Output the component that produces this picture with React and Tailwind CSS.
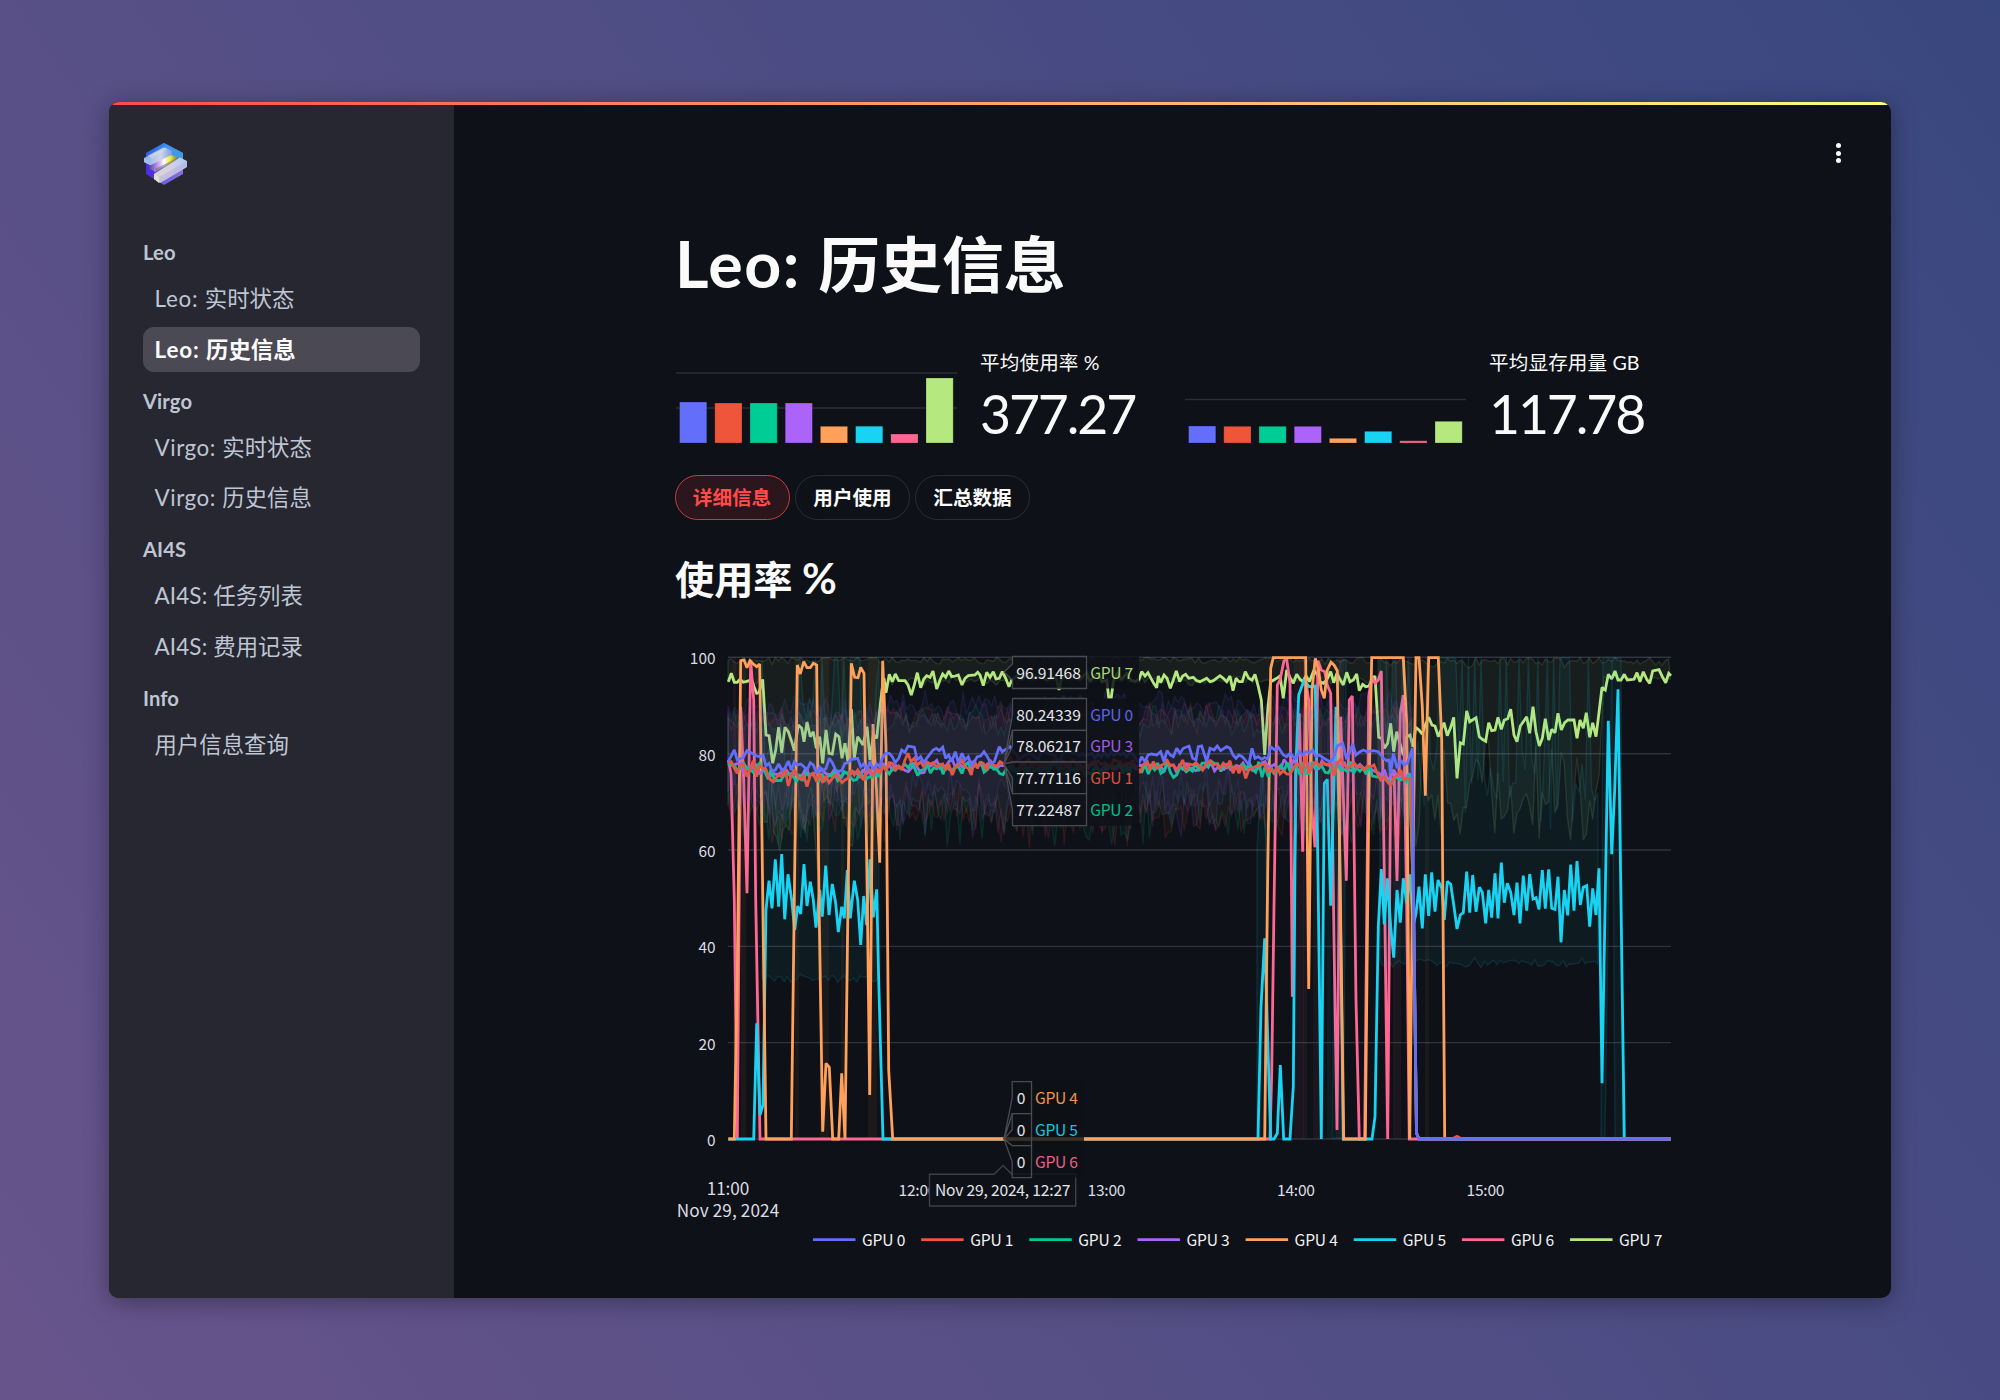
import React from 'react';

const C = ['#636efa', '#ef553b', '#00cc96', '#ab63fa', '#ffa15a', '#19d3f3', '#ff6692', '#b6e880'];
const UI = "font-['Lato','Noto_Sans_CJK_SC',sans-serif]";

/* ---------- chart data ---------- */
const Y0 = 1139;
const X_END = 1671;

// Turns "x,y x,y" written in 1/3 px units of a tile into chart coordinates.
const tile = (ox, oy, s) =>
  s.trim().split(/\s+/).map((p) => {
    const [x, y] = p.split(',').map(Number);
    return [ox + x / 3, oy + y / 3];
  });
const A = (s) => tile(660, 540, s);
const B = (s) => tile(980, 640, s);
const D = (s) => tile(1230, 640, s);
const E = (s) => tile(1440, 640, s);

const rng = (seed) => {
  let a = seed;
  return () => {
    a = (a * 1664525 + 1013904223) % 4294967296;
    return a / 4294967296;
  };
};
const noise = (seed, from, to, mean, amp) => {
  const r = rng(seed);
  const out = [];
  for (let x = from; x <= to; x += 3.158) out.push([x, mean + (r() + r() - 1) * amp]);
  return out;
};
// A mostly flat upper bound with frequent one-sample peaks at 100.
const spiky = (seed, from, to, low, amp) => {
  const r = rng(seed);
  const out = [];
  for (let x = from; x <= to; x += 3.158) out.push([x, r() < 0.36 ? 658 : low + (r() + r() - 1) * amp]);
  return out;
};
const path = (pts) => 'M' + pts.map(([x, y]) => x.toFixed(1) + ' ' + y.toFixed(1)).join('L');
const area = (up, low) => path(up) + 'L' + path([...low].reverse()).slice(1) + 'Z';

const drop = [[1413.5, 900], [1416.5, 1133], [1419, Y0]];
const rest = [[X_END, Y0]];

const gpu7 = [
  ...A('205,425 214,400 223,427 232,427 240,418 250,427 268,422 275,418 282,440 290,460 297,458 308,418 318,585 327,587 338,670 347,630 356,562 365,638 375,562 385,575 395,605 403,632 415,555 425,565 432,605 441,546 451,590 460,575 469,625 479,590 488,670 498,570 507,640 517,642 527,582 537,590 546,655 555,610 564,665 574,507 583,655 593,590 609,615 621,560 630,660 640,585 650,595 659,510 666,450 672,415 678,458 688,403 697,425 706,402 716,422 735,422 744,435 754,465 763,435 772,398 782,443 791,418 800,407 810,412 819,393 830,447 840,420 848,402 857,412 866,393 875,410 886,408 895,405 906,435 915,415 925,407 945,405 953,397'),
  ...B('0,105 10,137 20,97 30,112 40,95 48,117 58,115 67,95 77,115 87,140 95,120 110,108 125,118 140,105 160,115 180,108 200,120 228,110 237,150 246,112 270,105 300,118 320,98 330,125 342,108 355,100 366,125 380,120 386,172 394,172 400,125 412,100 425,118 440,100 452,120 465,125 477,118 485,95 495,108 504,98 513,115 521,130 530,143 535,108 542,128 552,105 561,115 571,145 580,120 589,93 599,125 608,108 617,103 626,115 640,112 650,122 660,125 680,115 690,125 700,122 720,107 730,115 740,125'),
  ...D('0,108 9,152 18,115 27,125 37,125 46,95 56,115 66,120 75,103 85,140 94,180 104,345 114,200 122,125 140,115 150,108 160,175 170,90 180,112 190,130 200,103 210,118 219,125 228,107 238,125 252,90 262,105 270,125 280,130 290,120 302,95 311,128 321,100 330,118 340,135 350,97 360,125 370,120 380,102 388,152 398,133 407,140 417,138 425,120 435,108 446,292 455,295 463,325 473,310 482,250 491,335 500,275 510,310 520,345 530,290 540,285 549,320 557,262 567,270 577,282 586,255 596,232 606,255 615,258 625,290'),
  ...E('5,265 12,248 22,287 32,262 41,232 51,415 61,308 70,312 80,213 89,245 108,233 118,290 127,298 137,304 146,248 155,272 165,270 174,232 184,268 193,240 203,236 212,208 222,285 231,305 241,258 250,245 260,230 269,280 279,200 288,275 298,318 307,295 316,236 326,300 335,268 345,278 354,220 364,270 374,248 384,240 402,240 411,295 420,240 430,265 439,218 449,292 458,248 468,290 478,210 486,142 496,150 505,103 515,117 525,93 534,120 543,120 553,103 562,120 582,118 591,98 600,125 610,95 620,118 629,130 638,93 657,89 667,110 677,128 686,100 693,107'),
];
const gpu6 = [
  ...A('205,660 213,700 223,1080 232,1797 242,500 251,720 261,1060 272,360 281,480 287,1080 300,1797'),
  ...D('120,1497 125,1300 132,800 142,135 150,120 162,62 170,58 180,130 187,1070 198,400 208,220 218,635 227,120 236,180 245,500 255,622 264,62 274,90 284,95 292,135 302,160 312,900 321,1470 332,230 341,500 349,722 358,180 367,168 378,1080 388,1497 404,1497 416,170 425,110 435,130 445,120 454,93 463,700 473,1497 482,400 492,390 501,723 511,220 520,165 530,800 538,1497'),
  ...rest,
];
const gpu5 = [
  ...A('205,1797 281,1797 290,1450 300,1725 309,1695 318,1110 327,1022 336,1105 346,958 356,1100 365,942 374,1138 384,1003 395,1080 404,1170 413,1098 422,1122 432,972 441,1098 451,1025 460,1080 468,1163 479,1050 487,1130 497,977 507,1125 517,1032 527,1090 535,1176 545,1100 553,1135 562,990 571,1135 583,1022 593,1080 602,1215 611,1068 620,1155 630,958 640,1132 650,1048 656,1320 669,1797'),
  ...D('84,1497 93,1100 104,895 122,1497 132,1497 142,1480 151,1275 161,1497 180,1497 190,1340 197,400 206,165 222,122 238,140 256,138 264,700 274,1497 283,430 292,418 302,797 318,200 328,560 340,1497 426,1497 435,1430 445,860 454,687 463,853 472,715 482,860 491,953 501,750 511,848 520,715 530,790 540,703 549,860 558,820 567,740 577,865 586,703 596,828 605,697 615,815 624,720'),
  ...E('5,745 13,840 22,724 32,733 42,800 51,867 61,825 70,818 80,695 89,818 98,705 108,815 118,742 127,757 137,850 146,750 155,833 165,700 174,835 184,668 193,788 202,730 212,757 222,825 231,728 240,850 250,707 260,812 269,702 279,777 288,773 297,808 307,690 316,806 326,688 335,805 345,808 354,710 363,907 373,750 383,826 392,674 402,812 411,663 421,795 430,742 440,737 449,860 458,745 468,825 477,685 486,1330 505,242 515,643 524,450 534,148 553,1497'),
  ...rest,
];
const gpu4 = [
  ...A('205,1797 223,1797 232,1300 242,362 252,360 261,383 270,362 280,372 290,380 299,372 306,900 318,1797 394,1797 403,1080 412,375 421,402 431,365 441,383 451,383 460,370 470,375 477,1080 488,1775 498,1570 508,1582 518,1797 536,1797 545,1600 555,1797 564,1080 574,370 584,412 594,413 602,382 612,400 622,1080 629,1665 639,552 650,760 659,968 668,362 678,620 686,1590 698,1797'),
  ...D('104,1497 113,700 122,85 130,53 227,53 236,1047 246,150 256,55 265,85 274,150 283,175 292,90 303,67 312,75 322,92 330,700 341,1497 406,1497 416,500 425,53 520,53 530,250 539,1497 548,700 558,53 567,53 577,200 586,467 596,53 625,53 635,300 644,1497'),
  ...rest,
];
const gpu3 = [...noise(31, 728, 762, 766, 9), ...noise(32, 765, 880, 773, 8), ...noise(33, 883, 1375, 767, 8), ...noise(34, 1378, 1412, 775, 6), ...drop, ...rest];
const gpu2 = [...noise(21, 728, 762, 768, 8), ...noise(22, 765, 880, 776, 8), ...noise(23, 883, 1375, 769, 9), ...noise(24, 1378, 1412, 779, 6), ...drop, ...rest];
const gpu1 = [
  ...A('205,670 214,665 223,685 232,700 241,675 250,672 261,710 270,690 280,662 290,710 298,675 308,685 318,688 327,715 340,725 355,705 365,710 375,685 385,738 394,705 403,688 413,710 422,718 431,705 441,740 451,705 460,700 470,725 479,700 488,728 498,708 507,728 517,715 527,705 537,715 546,728 555,720 564,715 574,690 583,705 593,690 603,710 612,720 621,685 630,690 640,705 650,685 659,700 668,680 678,690 688,668 697,670 706,690 716,678 725,690 735,660 744,640 753,665 763,655 772,675 782,665 791,680 800,665 810,672 819,668 829,680 838,675 848,672 857,690 866,672 877,705 886,682 895,675 906,660 915,680 925,685 934,705 943,660 952,685'),
  ...B('0,368 10,370 20,390 30,360 40,375 50,378 60,365 70,372 80,368 90,352 100,370'),
  ...noise(11, 1016, 1136, 765, 8),
  ...B('480,398 490,375 502,365 510,390 520,365 530,385 540,378 552,372 560,358 570,378 580,375 590,388 600,378 608,360 618,392 628,372 638,375 648,368 658,378 668,390 678,372 690,362 700,375 710,372 720,385 730,370 740,382'),
  ...D('0,362 9,400 18,375 27,400 37,375 47,415 56,390 66,385 75,380 90,375 104,372 113,395 122,388 132,400 142,380 150,402 160,392 170,402 180,403 190,385 198,375 208,372 216,400 227,345 236,400 248,375 258,365 268,378 280,368 292,375 302,368 312,408 322,370 332,358 342,375 352,385 362,378 372,368 382,382 392,378 402,390 412,378 422,380 432,375 442,400 452,420 462,410 472,425 482,438 492,412 502,408 512,390 522,420 532,415 542,418'),
  ...drop, [1452, Y0], [1457, 1136.4], [1462, Y0], ...rest,
];
const gpu0 = [
  ...A('205,665 223,630 232,660 250,652 261,632 280,642 290,648 300,650 309,645 318,678 327,670 336,693 346,690 356,672 365,690 375,685 385,663 394,690 403,665 412,675 422,672 432,680 441,690 451,668 460,675 470,700 479,682 488,693 498,685 508,655 517,668 527,690 537,695 546,690 555,670 564,668 574,657 583,657 593,655 602,680 611,672 621,690 630,665 640,690 650,672 659,680 668,652 678,640 688,640 697,650 706,668 716,655 725,630 735,637 744,618 763,622 772,660 782,650 791,668 800,655 819,630 829,625 838,632 848,622 857,655 866,645 875,665 886,635 895,668 906,640 915,660 925,650 934,675 943,665 952,650'),
  ...B('2,348 12,335 22,350 32,370 43,365 58,320 67,335 77,328 90,320 100,335'),
  ...noise(3, 1016, 1136, 755, 7),
  ...B('477,370 485,350 495,365 504,345 514,342 530,345 542,335 552,365 561,332 571,345 580,350 590,325 600,340 610,325 627,318 638,355 648,360 655,320 665,318 680,365 690,325 702,330 712,318 722,332 740,320'),
  ...D('0,325 9,345 18,355 27,345 37,350 46,360 56,375 66,325 75,355 85,350 95,358 104,352 113,357 122,320 135,330 145,322 160,345 170,350 180,340 190,350 198,355 208,335 218,345 228,335 238,340 248,330 258,350 268,345 278,352 290,360 302,365 312,350 322,318 338,310 350,358 360,335 368,312 378,345 390,335 400,330 412,335 430,332 445,335 460,355 470,362 478,360 482,400 490,340 502,385 512,360 522,375 532,370 548,325'),
  ...drop, ...rest,
];

const band = (seed, up, low) => area(
  [...noise(seed, 728, 878, up + 4, 16), ...noise(seed + 1, 881, 1413, up, 18)],
  [...noise(seed + 2, 728, 878, low, 36), ...noise(seed + 3, 881, 1413, low, 38)],
);
const bands = {
  0: [band(101, 706, 795)],
  1: [band(111, 717, 812)],
  2: [band(121, 721, 815)],
  3: [band(131, 716, 803)],
  5: [
    area(spiky(51, 762, 880, 745, 70), noise(52, 762, 880, 978, 6)),
    area(spiky(53, 1380, 1598, 785, 60), noise(54, 1380, 1598, 963, 6)),
    area([[1336, 760], [1340, 660], [1346, 660]], [[1332, 1138], [1344, 1138]]),
    area([[1257, 850], [1262, 760], [1266, 850]], [[1257, 1138], [1270, 1138]]),
    area([[1603, 658], [1621, 658]], [[1601, 1138], [1605, 1138], [1612, 660], [1615, 1138], [1623, 1138]]),
  ],
  7: [
    area(noise(71, 728, 1375, 660, 5).map(([x, y]) => [x, Math.max(657.5, y)]), [...noise(72, 728, 762, 682, 5), ...noise(73, 764, 878, 812, 60), ...noise(74, 886, 1375, 681, 6)]),
    area(noise(75, 1378, X_END, 662, 7).map(([x, y]) => [x, Math.max(657.5, y)]), [...noise(76, 1378, 1600, 798, 62), ...noise(77, 1604, X_END, 678, 3)]),
  ],
  4: [],
  6: [],
};
const series = [
  [7, gpu7], [6, gpu6], [5, gpu5], [4, gpu4], [3, gpu3], [2, gpu2], [1, gpu1], [0, gpu0],
];

const stripes = [
  [733, 3, 6], [741, 5, 4], [755, 3, 6], [795, 4, 4], [820, 9, 4], [841, 3, 4], [868, 5, 4], [873, 4, 4],
  [1294, 10, 6], [1303, 4, 6], [1313, 9, 6], [1327, 4, 5], [1336, 8, 6], [1385, 4, 6], [1393, 8, 6], [1407, 5, 6], [1425, 4, 4],
];

const tips = [
  [656.5, '96.91468', 'GPU 7', 7], [698.5, '80.24339', 'GPU 0', 0], [730.3, '78.06217', 'GPU 3', 3],
  [762, '77.77116', 'GPU 1', 1], [793.7, '77.22487', 'GPU 2', 2],
];
const zeroTips = [[1081.7, 'GPU 4', 4], [1113.7, 'GPU 5', 5], [1145.7, 'GPU 6', 6]];

function UsageChart() {
  return (
    <svg className="mt-[35px] block shrink-0 font-['Noto_Sans_CJK_SC',sans-serif]" width="1010" height="620" viewBox="675 640 1010 620">
      {[657.3, 753.7, 850, 946.4, 1042.6, 1139].map((y, i) => (
        <g key={y}>
          <line x1="728" x2={X_END} y1={y} y2={y} stroke="#31333f" strokeWidth="1.4" />
          <text x="715.5" y={y + 7} textAnchor="end" fontSize="15.4" fill="#dcdde4">{100 - i * 20}</text>
        </g>
      ))}
      {stripes.map(([x, w, c]) => (
        <rect key={x} x={x} y="657" width={w} height="482" fill={C[c]} opacity="0.06" />
      ))}
      {series.map(([i, pts]) => (
        <g key={i} strokeLinejoin="round">
          {bands[i].map((d) => (
            <path key={d} d={d} fill={C[i]} fillOpacity={i === 7 ? 0.06 : 0.05} stroke={C[i]} strokeOpacity="0.13" strokeWidth="1.4" />
          ))}
          <path d={path(pts)} fill="none" stroke={C[i]} strokeWidth="2.8" strokeLinejoin="miter" strokeMiterlimit="2" />
        </g>
      ))}

      <g fontSize="15.6" fill="#dcdde4">
        <text x="728" y="1195" textAnchor="middle" fontSize="17.2" textLength="42.5">11:00</text>
        <text x="728" y="1217" textAnchor="middle" fontSize="17.2" textLength="102.5">Nov 29, 2024</text>
        <text x="917.5" y="1195.5" textAnchor="middle" textLength="38">12:00</text>
        <text x="1106.5" y="1195.5" textAnchor="middle" textLength="38">13:00</text>
        <text x="1296" y="1195.5" textAnchor="middle" textLength="38">14:00</text>
        <text x="1485.5" y="1195.5" textAnchor="middle" textLength="38">15:00</text>
      </g>

      <g stroke="#3d3f45" strokeWidth="1.4" fill="#0e1117">
        <path d="M929.5 1174.2H994L1003 1165.5L1012 1174.2H1075.7V1206H929.5Z" />
      </g>
      <text x="935" y="1196.2" fontSize="15.6" fill="#e4e5ea" textLength="135.5">Nov 29, 2024, 12:27</text>

      {tips.map(([y, v, name, c]) => {
        const ty = c === 7 ? 672 : 764;
        const a = Math.min(Math.max(ty, y + 8), y + 24);
        return (
          <g key={name}>
            <rect x="1087" y={y} width="52" height="32" fill="#0e1117" opacity="0.85" />
            <path d={`M1004 ${ty}L1012.5 ${a - 8}V${y}H1086.5V${y + 32}H1012.5V${a + 8}Z`} fill="#0e1117" fillOpacity="0.9" stroke="#4a4b50" strokeWidth="1.3" />
            <text x="1016.3" y={y + 22} fontSize="15.6" fill="#e4e5ea" textLength="64.5">{v}</text>
            <text x="1090.2" y={y + 22} fontSize="15.6" fill={C[c]} opacity="0.92" textLength="43">{name}</text>
          </g>
        );
      })}
      {zeroTips.map(([y, name, c]) => {
        const a = Math.min(Math.max(1139, y + 8), y + 24);
        return (
          <g key={name}>
            <rect x="1031.5" y={y} width="52.5" height="32" fill="#0e1117" opacity="0.8" />
            <path d={`M1004 1139L1012.2 ${a - 8}V${y}H1031.5V${y + 32}H1012.2V${a + 8}Z`} fill="#0e1117" fillOpacity="0.8" stroke="#4a4b50" strokeWidth="1.3" />
            <text x="1021.2" y={y + 22.3} fontSize="15.6" textAnchor="middle" fill="#e4e5ea">0</text>
            <text x="1035" y={y + 22.3} fontSize="15.6" fill={C[c]} opacity="0.92" textLength="43">{name}</text>
          </g>
        );
      })}

      {C.map((c, i) => (
        <g key={c}>
          <line x1={813 + i * 108.15} x2={855.5 + i * 108.15} y1="1239.6" y2="1239.6" stroke={c} strokeWidth="2.7" />
          <text x={862 + i * 108.15} y="1246" fontSize="15.6" fill="#f0f1f4" textLength="43.3">{`GPU ${i}`}</text>
        </g>
      ))}
    </svg>
  );
}

function Logo() {
  return (
    <svg width="46" height="44" viewBox="0 0 46 44" className="block">
      <defs>
        <linearGradient id="lt" x1="0" x2="1" y1="0" y2="0.5"><stop offset="0" stopColor="#1747e0" /><stop offset="0.5" stopColor="#3f94f0" /><stop offset="1" stopColor="#3a9fe0" /></linearGradient>
        <linearGradient id="lb" x1="0" x2="1"><stop offset="0" stopColor="#4a25e0" /><stop offset="0.5" stopColor="#6b62e6" /><stop offset="1" stopColor="#8b6fd8" /></linearGradient>
        <linearGradient id="lw" x1="0" x2="1"><stop offset="0" stopColor="#8fa6ee" /><stop offset="0.6" stopColor="#cfd6ea" /><stop offset="1" stopColor="#7e9ae6" /></linearGradient>
        <linearGradient id="lm" x1="0" x2="1"><stop offset="0" stopColor="#4b45a0" /><stop offset="0.3" stopColor="#c79aee" /><stop offset="0.5" stopColor="#ffffff" /><stop offset="0.72" stopColor="#f1e72c" /><stop offset="1" stopColor="#5a5f70" /></linearGradient>
        <linearGradient id="lc" x1="0" x2="1"><stop offset="0" stopColor="#d9d6cf" /><stop offset="0.5" stopColor="#d8cfe2" /><stop offset="1" stopColor="#b4c9f5" /></linearGradient>
      </defs>
      <path d="M21 1L40 11V32L21 43L3 32V11Z" fill="url(#lb)" />
      <path d="M21 1L40 11V17L21 27L3 18V11Z" fill="url(#lt)" />
      <path d="M1 16L22 5.500L29 9V12L9 24L1 20Z" fill="url(#lw)" />
      <path d="M5 13.500L20 5.500L24 7L9 16Z" fill="#d5dbe4" opacity="0.6" />
      <path d="M1 16L9 19.500V24L1 20Z" fill="#9cc0ea" />
      <path d="M6 24L28 13L36 16L12 30L6 27Z" fill="url(#lm)" />
      <path d="M12 27L32 17L36 18L14 30Z" fill="#6a6c78" opacity="0.55" />
      <path d="M3 26L11 29V35L3 32Z" fill="#4f2ee0" />
      <path d="M11 32L37 15.500L44 19V25L17 41L11 37Z" fill="url(#lc)" />
      <path d="M11 32L16 35V41L11 37Z" fill="#e4e2cf" />
      <path d="M16 35L44 19V25L17 41Z" fill="#a9a6dc" opacity="0.4" />
    </svg>
  );
}

// A Latin prefix keeps its own letter spacing beside the CJK run.
function NavLabel({ text, spacing }) {
  const cut = text.indexOf(' ');
  if (cut < 0) return text;
  return (
    <>
      <span className={spacing}>{text.slice(0, cut + 1)}</span>
      {text.slice(cut + 1)}
    </>
  );
}

function NavGroup({ title, items, active, spacing = '', boldSpacing = '' }) {
  return (
    <div className="flex flex-col">
      <div className="mb-[9px] h-[30px] text-[20.2px] font-bold leading-[30px] tracking-[0.1px] text-[#bfc5d3]">{title}</div>
      <div className="mb-[14.1px] flex flex-col gap-[5.6px]">
        {items.map((t) => (
          <div
            key={t}
            className={
              t === active
                ? 'h-[45px] rounded-[11px] bg-[#4a4954] pl-[11.5px] text-[22.4px] font-bold leading-[45px] text-[#fafafa]'
                : 'h-[45px] rounded-[11px] pl-[11.5px] text-[22.4px] leading-[45px] text-[#bfc5d3]'
            }
          >
            <NavLabel text={t} spacing={t === active ? boldSpacing : spacing} />
          </div>
        ))}
      </div>
    </div>
  );
}

function Sparkbars({ lines, tops }) {
  return (
    <svg width="282" height="95" viewBox="0 350 282 95" className="block shrink-0">
      {lines.map((y) => (
        <line key={y} x1="1" x2="282" y1={y} y2={y} stroke="#2c2e38" strokeWidth="1.5" />
      ))}
      {tops.map((t, i) => (
        <rect key={i} x={4.6 + i * 35.2} y={t} width="27.2" height={443 - t} fill={C[i]} stroke="#0e1117" strokeOpacity="0.3" strokeWidth="0.8" />
      ))}
    </svg>
  );
}

function Metric({ label, value }) {
  return (
    <div className="flex flex-col text-[#fafafa]">
      <div className="h-[26px] whitespace-nowrap text-[19.6px] leading-[26px] tracking-[0.12px]">{label}</div>
      <div className="h-[70px] whitespace-nowrap text-[53.5px] leading-[75px] tracking-[-2.1px]">{value}</div>
    </div>
  );
}

export default function App() {
  return (
    <div className={`${UI} h-[1400px] w-[2000px] overflow-hidden bg-[linear-gradient(55deg,#67548b_0%,#39477f_100%)] px-[109px] pt-[102px]`}>
      <div className="flex h-[1196px] w-[1782px] flex-col overflow-hidden rounded-[10px] bg-[#0e1117] shadow-[0_4px_24px_rgba(0,0,0,0.35)]">
        <div className="h-[3px] shrink-0 bg-[linear-gradient(90deg,#ff4b4b,#fffd80)]" />
        <div className="flex min-h-0 flex-1">
          <aside className="w-[345px] shrink-0 bg-[#262730] pl-[34px] pr-[34px] pt-[37px]">
            <Logo />
            <nav className="mt-[51px] flex flex-col">
              <NavGroup title="Leo" items={['Leo: 实时状态', 'Leo: 历史信息']} active="Leo: 历史信息" spacing="tracking-[0.75px]" boldSpacing="tracking-[0.9px]" />
              <NavGroup title="Virgo" items={['Virgo: 实时状态', 'Virgo: 历史信息']} spacing="tracking-[0.55px]" />
              <NavGroup title="AI4S" items={['AI4S: 任务列表', 'AI4S: 费用记录']} spacing="tracking-[0.15px]" />
              <NavGroup title="Info" items={['用户信息查询']} />
            </nav>
          </aside>
          <main className="flex min-w-0 flex-1 justify-between pl-[221px]">
            <div className="flex w-[1020px] flex-col">
              <h1 className="mt-[122px] h-[74px] whitespace-nowrap text-[61.9px] font-bold leading-[72px] text-[#fafafa]">
                <span className="text-[64.5px] tracking-[1.5px]">Leo: </span>历史信息
              </h1>
              <div className="mt-[49px] flex h-[95px]">
                <div className="flex w-[509px] shrink-0 gap-[23px]">
                  <Sparkbars lines={[373, 408]} tops={[402, 403, 403, 403, 426.3, 426.2, 434, 378]} />
                  <Metric label="平均使用率 %" value="377.27" />
                </div>
                <div className="flex gap-[23px]">
                  <Sparkbars lines={[399.5]} tops={[426, 426.3, 426.3, 426.3, 438.3, 431.3, 440.8, 421.3]} />
                  <Metric label="平均显存用量 GB" value="117.78" />
                </div>
              </div>
              <div className="mt-[30px] flex h-[45px] gap-[5px] text-[19.6px] font-bold text-[#fafafa]">
                <button className="w-[115px] rounded-full border-[1.4px] border-[#c23e41] bg-[#2b161d] pr-[1px] text-[#ff4b4b]">详细信息</button>
                <button className="w-[115px] rounded-full border-[1.4px] border-[#2b2d33]">用户使用</button>
                <button className="w-[115px] rounded-full border-[1.4px] border-[#2b2d33]">汇总数据</button>
              </div>
              <h3 className="mt-[32.5px] h-[52.5px] text-[39.2px] font-bold leading-[50px] text-[#fafafa]">使用率 <span className="text-[42.5px]">%</span></h3>
              <UsageChart />
            </div>
            <div className="mr-[50px] mt-[38px] flex h-[20px] w-[5px] flex-col justify-between">
              <i className="h-[5px] w-[5px] rounded-full bg-[#fafafa]" />
              <i className="h-[5px] w-[5px] rounded-full bg-[#fafafa]" />
              <i className="h-[5px] w-[5px] rounded-full bg-[#fafafa]" />
            </div>
          </main>
        </div>
      </div>
    </div>
  );
}
